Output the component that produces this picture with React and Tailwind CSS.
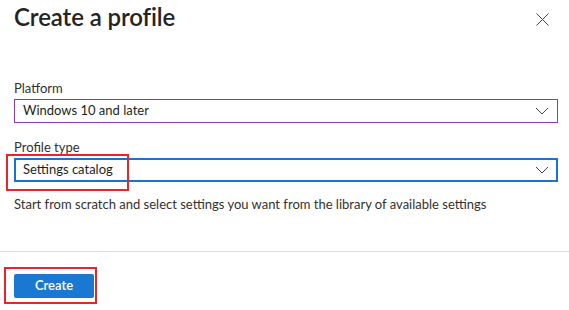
import React from "react";

function Chevron() {
  return (
    <svg width="14" height="8" viewBox="0 0 14 8" fill="none" className="shrink-0">
      <path d="M1 1 L7 7 L13 1" stroke="#444" strokeWidth="1" />
    </svg>
  );
}

export default function App() {
  return (
    <div
      className="w-[569px] h-[310px] bg-white text-[#201f1e] relative overflow-hidden"
      style={{ fontFamily: '"Segoe UI", Lato, "Noto Sans", sans-serif' }}
    >
      <div className="flex items-start justify-between pl-[14px] pr-[20px] pt-[1px] h-[52px]">
        <h1 className="text-[24px] leading-[32px] font-semibold tracking-[-0.1px] text-[#252423]">Create a profile</h1>
        <button className="mt-[11px] mr-[0px] w-[14px] h-[14px] flex items-center justify-center" aria-label="Close">
          <svg width="13" height="13" viewBox="0 0 13 13">
            <path d="M0.5 0.5 L12.5 12.5 M12.5 0.5 L0.5 12.5" stroke="#444" strokeWidth="1" />
          </svg>
        </button>
      </div>

      <div className="pl-[14px] pr-[11px] pt-[26px]">
        <div className="text-[13px] leading-[20px] text-[#323130]">Platform</div>
        <div className="mt-[1px] h-[24px] border border-[#8a3aad] flex items-center justify-between pl-[8px] pr-[8px] text-[13px]">
          <span>Windows 10 and later</span>
          <Chevron />
        </div>

        <div className="mt-[15px] text-[13px] leading-[19px] text-[#323130]">Profile type</div>
        <div className="relative mt-[1px] h-[24px] border-2 border-[#1a73d0] flex items-center justify-between pl-[7px] pr-[7px] text-[13px]">
          <span>Settings catalog</span>
          <Chevron />
          <div className="absolute left-[-10px] top-[-6px] w-[123px] h-[37px] border-2 border-[#e8262a] pointer-events-none" />
        </div>

        <p className="mt-[13px] text-[13px] leading-[19px] text-[#323130]">
          Start from scratch and select settings you want from the library of available settings
        </p>
      </div>

      <div className="absolute left-0 right-0 top-[251px] h-px bg-[#e1dfdd]" />
      <div className="absolute left-0 top-[252px] w-full">
        <div className="pl-[14px] pt-[20px]">
          <div className="relative inline-block">
            <button className="w-[80px] h-[24px] bg-[#1b78d2] text-white text-[13px] font-semibold rounded-[2px] flex items-center justify-center">
              Create
            </button>
            <div className="absolute left-[-10px] top-[-7px] w-[93px] h-[37px] border-2 border-[#e8262a] pointer-events-none" />
          </div>
        </div>
      </div>
    </div>
  );
}
